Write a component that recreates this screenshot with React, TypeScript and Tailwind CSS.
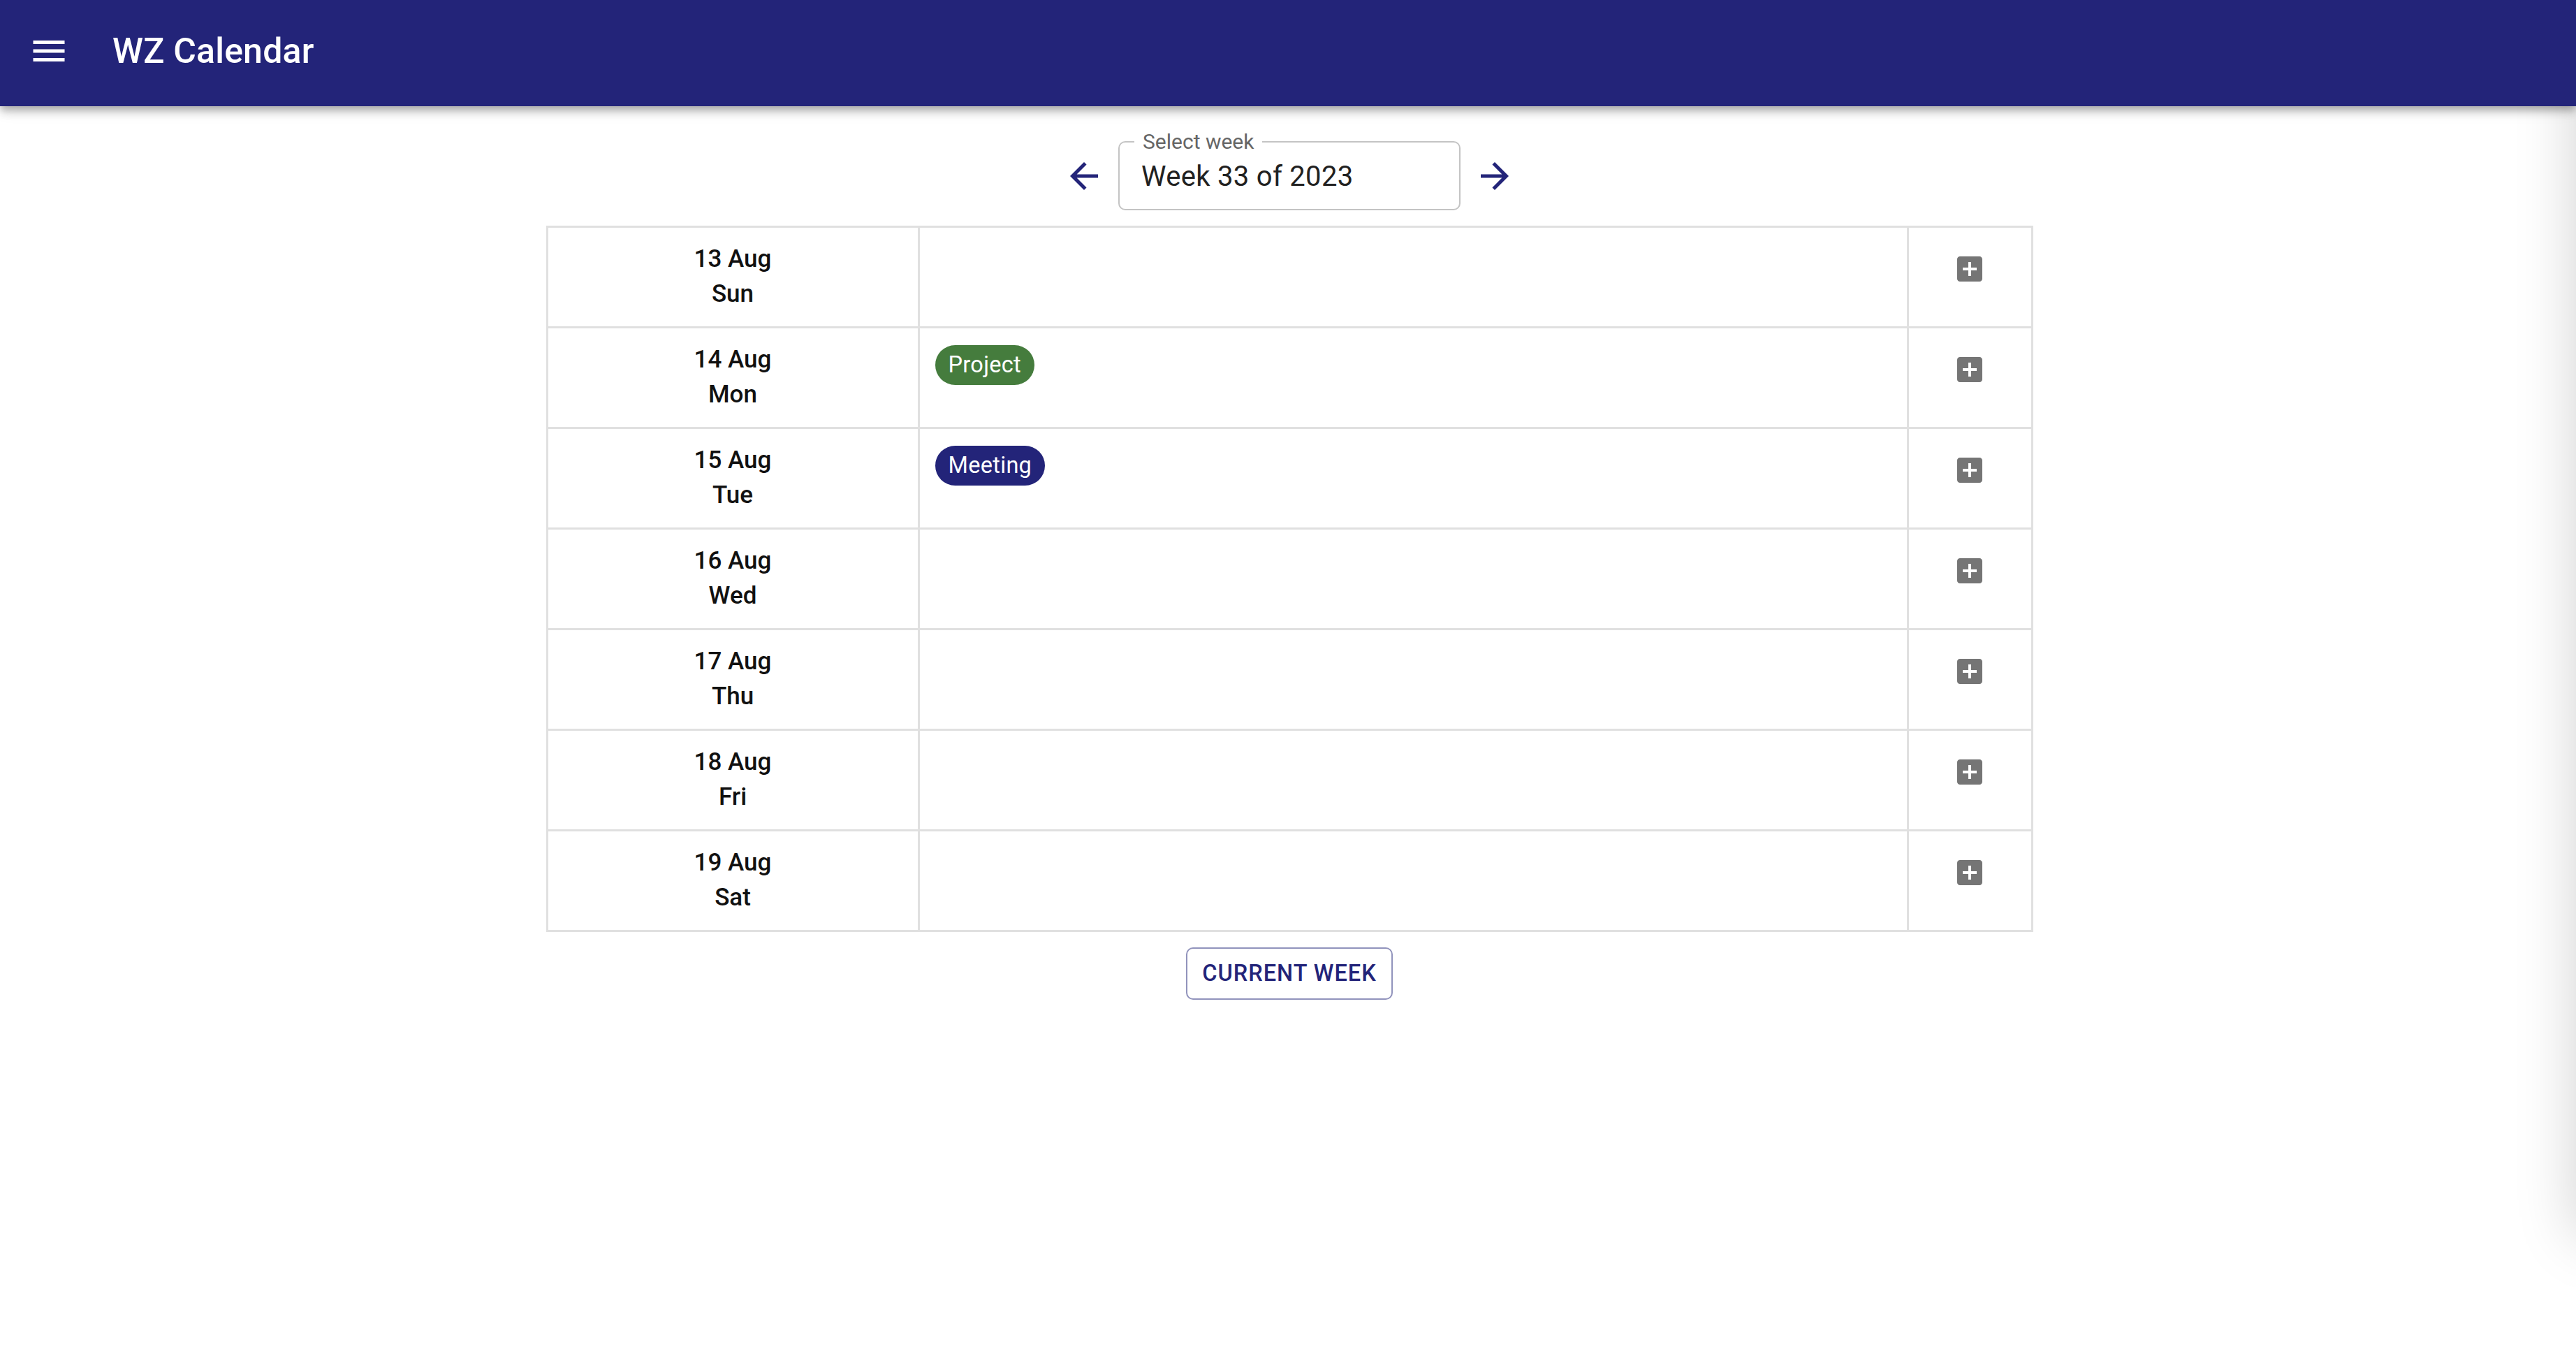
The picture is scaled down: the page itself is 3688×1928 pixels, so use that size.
import React from 'react'

const days = [
  { date: '13 Aug', day: 'Sun', events: [] as { label: string; color: string }[] },
  { date: '14 Aug', day: 'Mon', events: [{ label: 'Project', color: 'bg-[#457c3d]' }] },
  { date: '15 Aug', day: 'Tue', events: [{ label: 'Meeting', color: 'bg-[#232479]' }] },
  { date: '16 Aug', day: 'Wed', events: [] },
  { date: '17 Aug', day: 'Thu', events: [] },
  { date: '18 Aug', day: 'Fri', events: [] },
  { date: '19 Aug', day: 'Sat', events: [] },
]

function MenuIcon() {
  return (
    <svg viewBox="0 0 24 24" className="w-[60px] h-[60px] fill-white">
      <path d="M3 18h18v-2H3v2zm0-5h18v-2H3v2zm0-7v2h18V6H3z" />
    </svg>
  )
}

function ArrowBack() {
  return (
    <svg viewBox="0 0 24 24" className="w-[60px] h-[60px] fill-[#232479]">
      <path d="M20 11H7.83l5.59-5.59L12 4l-8 8 8 8 1.41-1.41L7.83 13H20v-2z" />
    </svg>
  )
}

function ArrowForward() {
  return (
    <svg viewBox="0 0 24 24" className="w-[60px] h-[60px] fill-[#232479]">
      <path d="M12 4l-1.41 1.41L16.17 11H4v2h12.17l-5.58 5.59L12 20l8-8z" />
    </svg>
  )
}

function AddBox() {
  return (
    <svg viewBox="0 0 24 24" className="w-[48px] h-[48px] fill-[#757575]">
      <path d="M19 3H5c-1.11 0-2 .9-2 2v14c0 1.1.89 2 2 2h14c1.1 0 2-.9 2-2V5c0-1.1-.9-2-2-2zm-2 10h-4v4h-2v-4H7v-2h4V7h2v4h4v2z" />
    </svg>
  )
}

export default function App() {
  return (
    <div className="min-h-screen bg-white font-['Roboto',sans-serif] overflow-hidden">
      {/* 右側に隠れたドロワーの影 */}
      <div className="fixed top-0 left-full h-[1770px] w-[600px] bg-white shadow-[0_0_80px_0_rgba(0,0,0,0.18)]" />

      <header className="relative z-10 h-[152px] bg-[#232479] flex items-center pb-[6px] shadow-[0_5px_10px_-2px_rgba(0,0,0,0.2),0_10px_12px_0_rgba(0,0,0,0.14),0_2px_24px_0_rgba(0,0,0,0.12)]">
        <button className="ml-[40px]">
          <MenuIcon />
        </button>
        <h1 className="ml-[61px] text-[50px] font-medium text-white leading-none tracking-[0.2px]">
          WZ Calendar
        </h1>
      </header>

      <main className="flex flex-col items-center">
        <div className="mt-[50px] ml-[4px] flex items-center">
          <button className="w-[98px] h-[98px] flex items-center justify-center">
            <ArrowBack />
          </button>
          <div className="relative w-[490px] h-[99px] border-2 border-[#c4c4c4] rounded-[10px] flex items-center pl-[31px] pt-[2px]">
            <span className="absolute left-[21px] -top-[18px] px-[12px] bg-white text-[30px] leading-[33px] text-[#666666]">
              Select week
            </span>
            <span className="text-[40px] text-[#212121] tracking-[0.3px]">Week 33 of 2023</span>
          </div>
          <button className="w-[98px] h-[98px] flex items-center justify-center">
            <ArrowForward />
          </button>
        </div>

        <table className="mt-[22px] ml-[4px] w-[2126px] table-fixed border-collapse">
          <colgroup>
            <col className="w-[532px]" />
            <col className="w-[1416px]" />
            <col className="w-[178px]" />
          </colgroup>
          <tbody>
            {days.map((d) => (
              <tr key={d.date} className="h-[144px]">
                <td className="border-[3px] border-[#e0e0e0] align-top text-center pt-[20px] text-[35px] leading-[50px] font-medium text-[#111111]">
                  <div>{d.date}</div>
                  <div>{d.day}</div>
                </td>
                <td className="border-[3px] border-[#e0e0e0] align-top pt-[24px] pl-[22px]">
                  <div className="flex gap-[12px]">
                    {d.events.map((e) => (
                      <span
                        key={e.label}
                        className={`${e.color} h-[57px] px-[19px] rounded-full flex items-center text-white text-[32.5px] tracking-[0.3px]`}
                      >
                        {e.label}
                      </span>
                    ))}
                  </div>
                </td>
                <td className="border-[3px] border-[#e0e0e0] align-top pt-[35px]">
                  <div className="flex justify-center">
                    <AddBox />
                  </div>
                </td>
              </tr>
            ))}
          </tbody>
        </table>

        <button className="mt-[22px] ml-[4px] w-[296px] h-[75px] border-2 border-[#9193bc] rounded-[10px] text-[#232479] text-[32.5px] font-medium tracking-[1px] uppercase">
          Current week
        </button>
      </main>
    </div>
  )
}
